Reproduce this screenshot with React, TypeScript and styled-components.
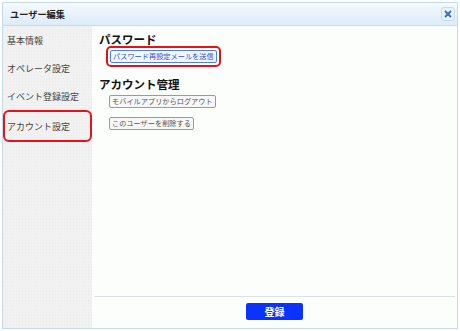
// Libraries
import styled, { createGlobalStyle } from 'styled-components';

// Global
const GlobalStyle = createGlobalStyle`
html, body {
  margin: 0;
  padding: 0;
  background: #ffffff;
}
body {
  font-family: "Noto Sans CJK JP", "Noto Sans", sans-serif;
  color: #333;
}
`

// Styled Components
const Page = styled.div`
width: 460px;
height: 331px;
padding: 2px;
box-sizing: border-box;
`

const Dialog = styled.div`
width: 456px;
height: 327px;
box-sizing: border-box;
border: 1px solid #c5dbec;
display: flex;
flex-direction: column;
background: #fcfefc;
`

const TitleBar = styled.div`
height: 22px;
flex: none;
display: flex;
align-items: center;
justify-content: space-between;
padding: 0 2px 0 7px;
background: linear-gradient(#f5fafd, #dcecf9);
border-bottom: 1px solid #c5dbec;
`

const Title = styled.span`
font-size: 9.2px;
font-weight: bold;
color: #222;
`

const CloseButton = styled.span`
width: 12px;
height: 12px;
border: 1px solid #c5dbec;
border-radius: 3px;
background: #e8f2fb;
display: flex;
align-items: center;
justify-content: center;
`

const Body = styled.div`
flex: 1;
display: flex;
min-height: 0;
`

const Sidebar = styled.div`
width: 89px;
flex: none;
background-color: #f1f1f1;
background-image: radial-gradient(#ebebeb 0.6px, transparent 0.8px);
background-size: 3px 3px;
display: flex;
flex-direction: column;
`

const SideItem = styled.div<{ $active?: boolean }>`
height: 28px;
box-sizing: border-box;
display: flex;
align-items: center;
padding-left: 4px;
font-size: 9px;
color: #444;
${p => p.$active && `
  height: 32px;
  border: 2px solid #e8101a;
  border-radius: 6px;
  padding-left: 2px;
`}
`

const Main = styled.div`
flex: 1;
display: flex;
flex-direction: column;
`

const Content = styled.div`
flex: 1;
padding: 6px 0 0 7px;
display: flex;
flex-direction: column;
align-items: flex-start;
`

const Heading = styled.div<{ $gap?: number }>`
font-size: 11.5px;
font-weight: bold;
color: #111;
line-height: 14px;
margin-top: ${p => p.$gap ?? 0}px;
`

const Highlight = styled.div`
margin: 0 0 0 7px;
padding: 2px;
border: 2px solid #e8101a;
border-radius: 5px;
display: flex;
`

const Button = styled.button<{ $primary?: boolean; $gap?: number }>`
font-family: inherit;
font-size: 7.2px;
line-height: 11px;
height: 13px;
padding: 0 2px;
border-radius: 2px;
cursor: pointer;
background: ${p => p.$primary ? '#f2f6ff' : '#f7f7f7'};
border: 1px solid ${p => p.$primary ? '#4f7de0' : '#9a9a9a'};
color: ${p => p.$primary ? '#2a55d8' : '#555'};
margin-left: ${p => p.$primary ? '0' : '10px'};
margin-top: ${p => p.$gap ?? 0}px;
`

const Footer = styled.div`
height: 31px;
flex: none;
margin: 0 2px;
border-top: 1px solid #e2dee6;
display: flex;
align-items: center;
justify-content: center;
`

const SubmitButton = styled.button`
width: 57px;
height: 17px;
margin-top: -2px;
border: none;
border-radius: 2px;
background: #0a33ff;
color: #fff;
font-family: inherit;
font-size: 10px;
font-weight: bold;
cursor: pointer;
`

function App(): JSX.Element {
  return (
    <Page>
      <GlobalStyle />
      <Dialog>
        <TitleBar>
          <Title>ユーザー編集</Title>
          <CloseButton>
            <svg width="8" height="8" viewBox="0 0 8 8">
              <path d="M1 1L7 7M7 1L1 7" stroke="#2e6fb7" strokeWidth="1.8" />
            </svg>
          </CloseButton>
        </TitleBar>
        <Body>
          <Sidebar>
            <SideItem>基本情報</SideItem>
            <SideItem>オペレータ設定</SideItem>
            <SideItem>イベント登録設定</SideItem>
            <SideItem $active>アカウント設定</SideItem>
          </Sidebar>
          <Main>
            <Content>
              <Heading>パスワード</Heading>
              <Highlight>
                <Button $primary>パスワード再設定メールを送信</Button>
              </Highlight>
              <Heading $gap={10}>アカウント管理</Heading>
              <Button $gap={4}>モバイルアプリからログアウト</Button>
              <Button $gap={9}>このユーザーを削除する</Button>
            </Content>
            <Footer>
              <SubmitButton>登録</SubmitButton>
            </Footer>
          </Main>
        </Body>
      </Dialog>
    </Page>
  );
};

export default App;
